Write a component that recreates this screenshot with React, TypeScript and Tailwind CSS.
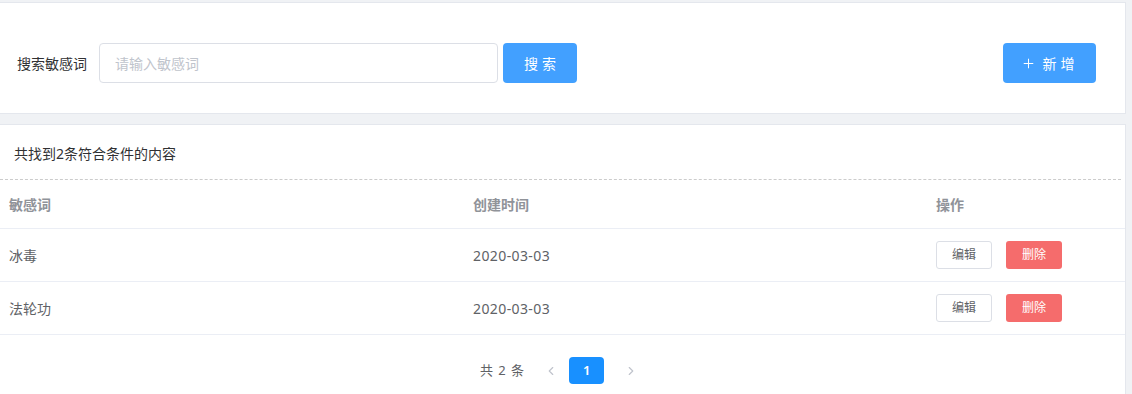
import { Plus, ChevronLeft, ChevronRight } from "lucide-react";

interface WordRow {
    word: string;
    created: string;
}

const rows: WordRow[] = [
    { word: "冰毒", created: "2020-03-03" },
    { word: "法轮功", created: "2020-03-03" },
];

const font = {
    fontFamily: '"Noto Sans", "Noto Sans CJK SC", sans-serif',
};

const App: React.FC = () => {
    return (
        <div
            className="min-h-[394px] bg-[#f0f2f5] pt-[2px] pr-[6px] text-[14px] text-[#606266]"
            style={font}
        >
            {/* search bar */}
            <div className="bg-white border border-l-0 border-[#e4e7ed] pt-[40px] pb-[30px] pr-[29px] flex items-center">
                <span className="pl-[17px] w-[99px] text-[#303133]">搜索敏感词</span>
                <input
                    className="w-[399px] h-[40px] rounded-[4px] border border-[#dcdfe6] px-[15px] outline-none placeholder:text-[#c0c4cc]"
                    placeholder="请输入敏感词"
                />
                <button className="ml-[5px] w-[74px] h-[40px] rounded-[4px] bg-[#42a0ff] text-white tracking-[4px] pl-[4px]">
                    搜索
                </button>
                <button className="ml-auto w-[93px] h-[40px] rounded-[4px] bg-[#42a0ff] text-white flex items-center justify-center gap-[5px]">
                    <Plus size={15} strokeWidth={1.6} />
                    <span className="tracking-[4px] pl-[2px]">新增</span>
                </button>
            </div>

            {/* result list */}
            <div className="mt-[10px] bg-white border border-l-0 border-[#e4e7ed] min-h-[280px]">
                <div className="h-[54px] flex items-center pl-[14px] pt-[2px] text-[#303133]">
                    共找到2条符合条件的内容
                </div>
                <div className="mr-[4px] border-t border-dashed border-[#cccccc]" />

                <div className="grid grid-cols-[464px_463px_1fr] pl-[9px] h-[49px] items-center border-b border-[#ebeef5] font-bold text-[#909399]">
                    <span>敏感词</span>
                    <span>创建时间</span>
                    <span>操作</span>
                </div>
                {rows.map((row, idx) => (
                    <div
                        key={idx}
                        className="grid grid-cols-[464px_463px_1fr] pl-[9px] h-[53px] items-center border-b border-[#ebeef5]"
                    >
                        <span>{row.word}</span>
                        <span className="tracking-[0.4px]">{row.created}</span>
                        <div className="flex items-center gap-[14px]">
                            <button className="w-[56px] h-[28px] rounded-[3px] border border-[#dcdfe6] bg-white text-[12px] text-[#606266]">
                                编辑
                            </button>
                            <button className="w-[56px] h-[28px] rounded-[3px] bg-[#f56c6c] text-[12px] text-white">
                                删除
                            </button>
                        </div>
                    </div>
                ))}

                <div className="flex items-center justify-center mt-[22px] pr-[7px] text-[13px]">
                    <span className="tracking-[1px]">共 2 条</span>
                    <ChevronLeft size={14} className="ml-[19px] text-[#c0c4cc]" />
                    <span className="ml-[11px] w-[35px] h-[27px] rounded-[4px] bg-[#1890ff] text-white font-semibold flex items-center justify-center">
                        1
                    </span>
                    <ChevronRight size={14} className="ml-[20px] text-[#c0c4cc]" />
                </div>
            </div>
        </div>
    );
};

export default App;
